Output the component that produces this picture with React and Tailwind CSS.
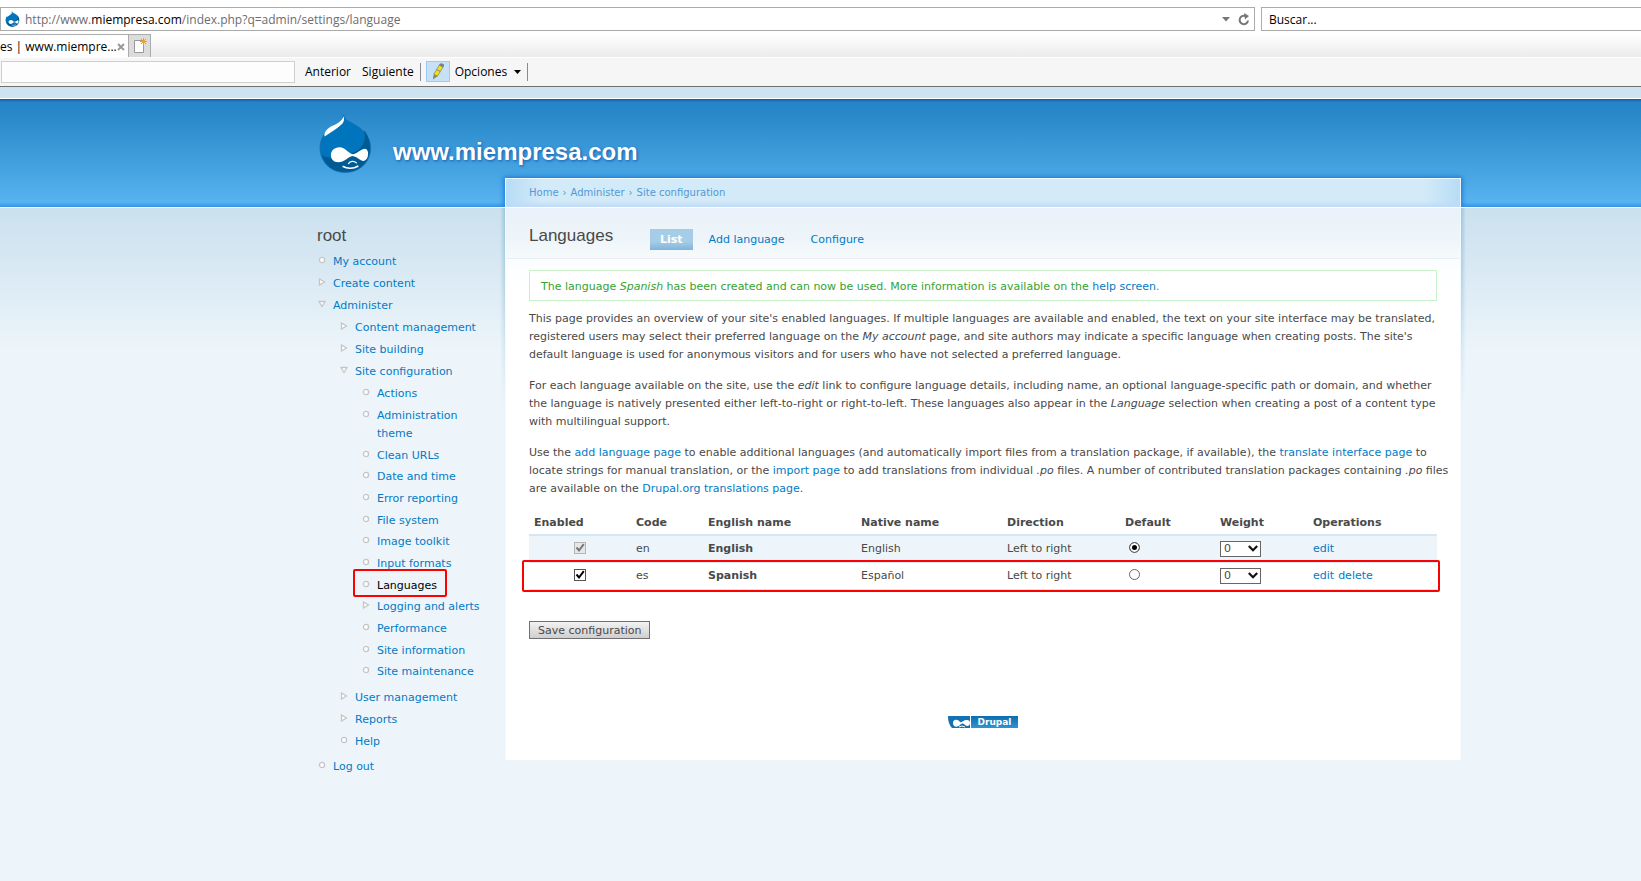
import React from "react";

const link = "text-[#027ac6] hover:underline";

function Druplicon({ className }) {
  return (
    <svg viewBox="58 58 160 180" className={className} aria-hidden="true">
      <path d="M132 60c2 12 10 17 26 25 28 14 56 38 56 75 0 43-34 74-77 74s-76-32-76-74c0-33 20-54 42-66 18-10 28-20 29-34z" fill="#0075be" stroke="#1b6aa6" strokeWidth="2" />
      <path d="M194 106c8 38-6 60-38 70-30 12-68 20-89 6 9 31 34 50 70 50 44 0 75-30 75-73 0-22-8-40-18-53z" fill="#005a93" />
      <path d="M132 64c4 10 1 19-8 27-14 12-30 23-49 34-3-12 7-24 24-32 16-7 28-14 33-29z" fill="#fff" />
      <path d="M120 158c-16 0-26 11-26 24s9 21 22 21c19 0 30-17 43-19 15 2 24 16 34 15 10-1 14-14 13-25-1-10-8-14-16-10-12 5-19 14-30 15-14-2-22-21-40-21z" fill="#fff" />
      <path d="M147 207c5-8 17-9 24-2" fill="none" stroke="#fff" strokeWidth="4" strokeLinecap="round" />
      <path d="M131 216c11 7 32 7 44-1" fill="none" stroke="#fff" strokeWidth="5" strokeLinecap="round" />
    </svg>
  );
}

function Bullet({ kind }) {
  return (
    <svg viewBox="0 0 8 8" className="mt-[3px] h-2 w-2 shrink-0" fill="#fff" stroke="#c6c6c6" strokeWidth="1.3" aria-hidden="true">
      {kind === "leaf" && <circle cx="4" cy="4" r="2.6" />}
      {kind === "closed" && <path d="M1.5 1v6l5-3z" />}
      {kind === "open" && <path d="M1 1.5h6l-3 5z" />}
    </svg>
  );
}

const menu = [
  { label: "My account" },
  { label: "Create content", kind: "closed" },
  {
    label: "Administer",
    kind: "open",
    items: [
      { label: "Content management", kind: "closed" },
      { label: "Site building", kind: "closed" },
      {
        label: "Site configuration",
        kind: "open",
        items: [
          { label: "Actions" },
          { label: "Administration theme" },
          { label: "Clean URLs" },
          { label: "Date and time" },
          { label: "Error reporting" },
          { label: "File system" },
          { label: "Image toolkit" },
          { label: "Input formats" },
          { label: "Languages", active: true },
          { label: "Logging and alerts", kind: "closed" },
          { label: "Performance" },
          { label: "Site information" },
          { label: "Site maintenance" },
        ],
      },
      { label: "User management", kind: "closed" },
      { label: "Reports", kind: "closed" },
      { label: "Help" },
    ],
  },
  { label: "Log out" },
];

function Menu({ items, nested }) {
  return (
    <ul className={nested ? "mb-1 ml-[22px]" : ""}>
      {items.map((item) => (
        <li key={item.label} className="pb-1 nth-[3n]:pb-[3px] has-[ul]:pb-0!">
          <div className={`relative flex gap-[7px] ${item.items ? "pb-1" : ""}`}>
            <Bullet kind={item.kind || "leaf"} />
            <a href="#" className={item.active ? "text-black" : link}>
              {item.label}
            </a>
            {item.active && (
              <span className="pointer-events-none absolute -top-2 -left-[9px] h-7 w-[94px] rounded-xs border-2 border-[#fe0000]" />
            )}
          </div>
          {item.items && <Menu items={item.items} nested />}
        </li>
      ))}
    </ul>
  );
}

function AddressBar() {
  return (
    <div className="flex h-[34px] gap-[6px] bg-white pt-[7px]">
      <div className="flex h-6 w-[1255px] min-w-0 items-center border border-[#ababab] pr-1 pl-1">
        <Druplicon className="mr-[5px] h-4 w-[15px]" />
        <p className="flex-1 pt-px text-[#6d6d6d]">
          http://www.<span className="text-black">miempresa.com</span>/index.php?q=admin/settings/language
        </p>
        <button type="button" aria-label="Historial" className="mr-2">
          <svg viewBox="0 0 8 5" className="h-[5px] w-2" fill="#777"><path d="M0 0h8L4 4.500z" /></svg>
        </button>
        <button type="button" aria-label="Actualizar">
          <svg viewBox="0 0 12 13" className="h-[13px] w-3" fill="none" stroke="#777" strokeWidth="2">
            <path d="M10 7.500a4.200 4.200 0 1 1-2.600-4.400" />
            <path d="M6 0l5 3-4 3.500z" fill="#777" stroke="none" />
          </svg>
        </button>
      </div>
      <input aria-label="Buscar" placeholder="Buscar..." className="h-6 min-w-0 flex-1 border border-r-0 border-[#ababab] px-[7px] outline-none placeholder:text-black" />
    </div>
  );
}

function TabStrip() {
  return (
    <div className="flex h-[23px] bg-linear-to-b from-white to-[#ebebeb]">
      <div className="flex w-[129px] items-center justify-between border-t border-r border-[#ababab] bg-white pt-px pr-[6px]">
        <span className="whitespace-nowrap">es | www.miempre...</span>
        <button type="button" aria-label="Cerrar pestaña">
          <svg viewBox="0 0 8 8" className="h-2 w-2" stroke="#999" strokeWidth="2"><path d="M1 1l6 6M7 1L1 7" /></svg>
        </button>
      </div>
      <button type="button" aria-label="Nueva pestaña" className="flex w-[22px] items-center justify-center border-t border-r border-[#ababab] bg-[#dcdcdc]">
        <svg viewBox="0 0 14 16" className="h-4 w-[14px]">
          <path d="M1.500 2.500h9v12h-9z" fill="#fff" stroke="#999" />
          <path d="M10.500 0v7M7 3.500h7M8 1l5 5M13 1L8 6" stroke="#f0a020" />
        </svg>
      </button>
    </div>
  );
}

function FindBar() {
  return (
    <div className="flex h-[30px] items-center border-t border-b border-t-white border-b-[#6f6f6f] bg-[#f6f6f6] pb-px pl-px">
      <input aria-label="Buscar en la página" className="mt-px h-[22px] w-[294px] border border-[#cfcfcf] bg-[#fdfdfd] outline-none" />
      <button type="button" className="ml-[10px]">Anterior</button>
      <button type="button" className="ml-[11px]">Siguiente</button>
      <span className="ml-[6px] h-[18px] w-px bg-[#8a8a8a]" />
      <button type="button" aria-label="Resaltar" className="ml-[5px] flex h-[21px] w-6 items-center justify-center border border-[#99ccf5] bg-[#c5e0f7]">
        <svg viewBox="0 0 14 18" className="h-[17px] w-[13px]">
          <path d="M9 2l4 2-6 10-4-2z" fill="#f0e020" stroke="#8a8a40" strokeWidth=".8" />
          <path d="M3 12l4 2-5 3.500z" fill="#7d8a60" />
          <path d="M9 2l2-1.500L14 2l-1 2zM6 7l4 2" fill="#6f8090" stroke="#6f8090" />
        </svg>
      </button>
      <button type="button" className="ml-[5px] flex items-center gap-[7px]">
        Opciones
        <svg viewBox="0 0 7 4" className="h-1 w-[7px]"><path d="M0 0h7L3.500 4z" /></svg>
      </button>
      <span className="ml-[6px] h-[18px] w-px bg-[#8a8a8a]" />
    </div>
  );
}

const rows = [
  { code: "en", name: "English", native: "English", locked: true, ops: ["edit"] },
  { code: "es", name: "Spanish", native: "Español", marked: true, ops: ["edit", "delete"] },
];

const columns = [
  ["Enabled", "w-[102px]"],
  ["Code", "w-[72px]"],
  ["English name", "w-[153px]"],
  ["Native name", "w-[146px]"],
  ["Direction", "w-[118px]"],
  ["Default", "w-[95px]"],
  ["Weight", "w-[93px]"],
  ["Operations", ""],
];

function LanguageTable() {
  return (
    <table className="mt-4 w-full table-fixed border-collapse text-left">
      <thead>
        <tr className="border-b-2 border-[#d3e7f4]">
          {columns.map(([name, width]) => (
            <th key={name} scope="col" className={`${width} px-[5px] pb-[2px] font-bold`}>{name}</th>
          ))}
        </tr>
      </thead>
      <tbody>
        {rows.map((row) => (
          <tr key={row.code} className="relative h-[27px] border-b border-[#d3e7f4] odd:bg-[#edf5fa]">
            <td className="px-[5px]">
              <span className="mx-auto mb-[2px] grid h-3 w-3">
                <input type="checkbox" aria-label={`Enable ${row.name}`} defaultChecked disabled={row.locked} className="peer col-start-1 row-start-1 h-3 w-3 appearance-none border border-[#555] bg-white disabled:border-[#b5b5b5] disabled:bg-[#e6e6e6]" />
                <svg viewBox="0 0 12 12" className="pointer-events-none relative invisible col-start-1 row-start-1 h-3 w-3 stroke-black peer-checked:visible peer-disabled:stroke-[#777]" fill="none" strokeWidth="2">
                  <path d="M2.500 5.500L5 8.500 9.800 2.200" />
                </svg>
              </span>
            </td>
            <td className="px-[5px]">{row.code}</td>
            <td className="px-[5px] font-bold">{row.name}</td>
            <td className="px-[5px]">{row.native}</td>
            <td className="px-[5px]">Left to right</td>
            <td className="px-[5px]">
              <input type="radio" name="default" aria-label={`Default ${row.name}`} defaultChecked={row.locked} className="mb-[2px] ml-1 block h-[11px] w-[11px] appearance-none rounded-full border border-[#666] bg-white checked:bg-black checked:shadow-[inset_0_0_0_2px_#fff]" />
            </td>
            <td className="px-[5px]">
              <div className="flex items-center">
                <select aria-label={`Weight ${row.name}`} className="h-4 w-[41px] appearance-none border border-[#666] bg-white pl-[3px] leading-[14px]">
                  <option>0</option>
                </select>
                <svg viewBox="0 0 10 7" className="pointer-events-none -ml-[13px] h-[7px] w-[10px]" fill="none" stroke="#111" strokeWidth="2.200"><path d="M.8 1L5 5.200 9.200 1" /></svg>
              </div>
            </td>
            <td className="px-[5px]">
              <span className="flex gap-1">
                {row.ops.map((op) => <a key={op} href="#" className={link}>{op}</a>)}
              </span>
              {row.marked && <span className="pointer-events-none absolute -top-[2px] -right-[3px] -bottom-1 -left-[7px] rounded-xs border-2 border-[#fe0000]" />}
            </td>
          </tr>
        ))}
      </tbody>
    </table>
  );
}

function Content() {
  return (
    <main className="relative min-w-0 flex-1 self-start border-x border-[#f4fafd] bg-[linear-gradient(to_bottom,#fff_30px,#e9f2fa_30px,#eef5f9_61px,#f6fafc_80px,#e7eff4_80px,#e7eff4_81px,#fafdff_81px,#fff_111px)] px-[23px] pb-8">
      <span className="pointer-events-none absolute top-[30px] -left-[6px] h-[200px] w-[5px] bg-linear-to-r from-transparent to-[#9cc6de] mask-b-from-0%" />
      <span className="pointer-events-none absolute top-[30px] -right-[6px] h-[200px] w-[5px] bg-linear-to-l from-transparent to-[#9cc6de] mask-b-from-0%" />
      <nav aria-label="Breadcrumb" className="-mx-6 flex h-[29px] items-center gap-1 border-x border-t border-[#eef8fe] bg-[#d3eaf8] bg-[linear-gradient(to_bottom,transparent_22px,#bfdaf5_28px),linear-gradient(to_right,#b7dcf6_0,transparent_36px),linear-gradient(to_left,#b7dcf6_0,transparent_36px)] px-[23px] text-[10px] text-[#5199d6] shadow-[0_0_5px_1px_#1573d8] [clip-path:inset(-7px_-7px_0_-7px)]">
        <a href="#">Home</a>›<a href="#">Administer</a>›<a href="#">Site configuration</a>
      </nav>
      <div className="flex h-[52px] items-center pt-[6px]">
        <h2 className="w-[121px] font-['Liberation_Sans',sans-serif] text-[17px]">Languages</h2>
        <nav aria-label="Tabs" className="mt-[6px] flex gap-4">
          <a href="#" className="bg-linear-to-b from-[#a5cde6] from-60% to-[#7fb4da] px-[10px] py-px leading-[19px] font-bold text-white">List</a>
          <a href="#" className={`${link} leading-[21px]`}>Add language</a>
          <a href="#" className={`${link} ml-[10px] leading-[21px]`}>Configure</a>
        </nav>
      </div>
      <p className="mt-[11px] border border-[#c7f2c8] bg-white px-[11px] pt-[7px] pb-1 text-[#33a333]">
        The language <em>Spanish</em> has been created and can now be used. More information is available on the{" "}
        <a href="#" className={link}>help screen</a>.
      </p>
      <div className="-mr-4 mt-[9px] space-y-[13px]">
        <p>
          This page provides an overview of your site's enabled languages. If multiple languages are available and enabled, the text on your site interface may be translated, registered users may select their preferred language on the <em>My account</em> page, and site authors may indicate a specific language when creating posts. The site's default language is used for anonymous visitors and for users who have not selected a preferred language.
        </p>
        <p>
          For each language available on the site, use the <em>edit</em> link to configure language details, including name, an optional language-specific path or domain, and whether the{"\u00a0"}language is natively presented either left-to-right or right-to-left. These languages also appear in the <em>Language</em> selection when creating a post of a content type with{"\u00a0"}multilingual support.
        </p>
        <p>
          Use the <a href="#" className={link}>add language page</a> to enable additional languages (and automatically import files from a translation package, if available), the <a href="#" className={link}>translate interface page</a> to locate strings for manual translation, or the <a href="#" className={link}>import page</a> to add translations from individual <em>.po</em> files. A number of contributed translation packages containing <em>.po</em> files are available on the <a href="#" className={link}>Drupal.org translations page</a>.
        </p>
      </div>
      <LanguageTable />
      <button type="button" className="mt-[31px] h-[18px] border border-[#707070] bg-linear-to-b from-[#f2f2f2] to-[#cfcfcf] px-2 leading-[18px]">Save configuration</button>
      <footer className="mt-[76px] flex justify-center">
        <a href="#" aria-label="Drupal" className="flex h-3 bg-[#0a75bb]">
          <svg viewBox="0 0 23 12" className="h-3 w-[23px]">
            <path d="M0 0h23v12H0z" fill="#fff" />
            <path d="M0 0h22v12H4Q0 8 0 0z" fill="#1471b4" />
            <path d="M5 7c0-4 5-4 7-1 2 1 4-2 6-2s4 0 4 3-3 4-5 2-3-2-5 0-7 3-7-2z" fill="#fff" />
            <path d="M11 11q3-2 6 0" stroke="#fff" fill="none" />
          </svg>
          <span className="bg-linear-to-b from-[#0a6cb0] to-[#2f94d2] px-[7px] text-[9px] leading-3 font-bold text-white">Drupal</span>
        </a>
      </footer>
    </main>
  );
}

export default function App() {
  return (
    <div className="flex min-h-screen flex-col bg-[#edf5fa]">
      <div className="font-['Open_Sans','Noto_Sans',sans-serif] text-xs text-black">
        <AddressBar />
        <TabStrip />
        <FindBar />
      </div>
      <div className="flex-1 bg-[linear-gradient(to_bottom,#cde3f1_0,#cde3f1_11px,#fff_11px,#fff_12px,#1257a6_12px,#2484c6_15px,#2787c8_25px,#57b3ef_115px,#3592e5_120px,#fff_120px,#fff_121px,#cbe1ee_121px,#d2e5f1_155px,#edf5fa_265px)] font-['DejaVu_Sans',sans-serif] text-[11px] leading-[18px] text-[#494949]">
        <header className="flex h-[91px] pt-[27px] pl-[319px]">
          <a href="#" className="flex">
            <Druplicon className="h-[60px] w-[53px]" />
            <h1 className="mt-6 ml-[21px] font-['Liberation_Sans',sans-serif] text-2xl leading-7 font-bold text-white [text-shadow:1px_1px_3px_#1659ac]">www.miempresa.com</h1>
          </a>
        </header>
        <div className="flex pr-[180px] pb-10 pl-[317px]">
          <aside className="w-[188px] pt-12 pr-5">
            <h2 className="mb-[7px] font-['Liberation_Sans',sans-serif] text-[17px] leading-5">root</h2>
            <nav aria-label="root" className="pl-px"><Menu items={menu} /></nav>
          </aside>
          <Content />
        </div>
      </div>
    </div>
  );
}
